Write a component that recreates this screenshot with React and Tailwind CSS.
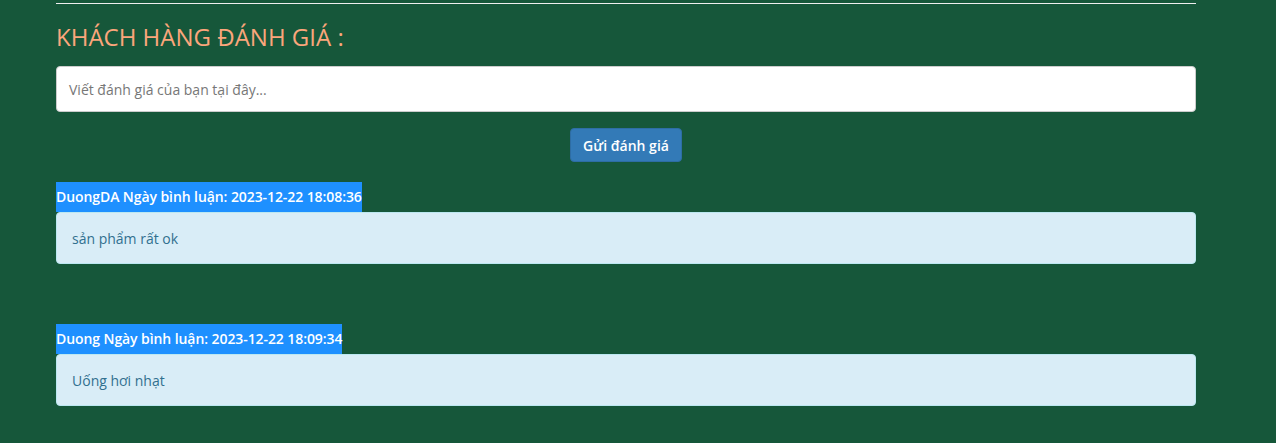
export default function App() {
  const comments = [
    { user: "DuongDA", date: "2023-12-22 18:08:36", text: "sản phẩm rất ok" },
    { user: "Duong", date: "2023-12-22 18:09:34", text: "Uống hơi nhạt" },
  ];
  return (
    <div className="min-h-[443px] w-full bg-[#16573a]" style={{ fontFamily: '"Open Sans", "Noto Sans", sans-serif' }}>
      <div className="ml-[56px] w-[1140px] pt-[3px]">
        <div className="h-px w-full bg-[#eeeeee]" />
        <h2 className="mt-[18px] text-[24px] font-medium leading-[30px] text-[#fba67c]">KHÁCH HÀNG ĐÁNH GIÁ :</h2>
        <div className="mt-[14px] flex h-[46px] w-full items-center rounded-[4px] border border-[#cccccc] bg-white px-[12px]">
          <span className="text-[14px] text-[#777777]">Viết đánh giá của bạn tại đây...</span>
        </div>
        <div className="mt-[16px] flex justify-center">
          <button className="h-[34px] rounded-[4px] border border-[#2e6da4] bg-[#337ab7] px-[12px] text-[14px] font-semibold text-white">
            Gửi đánh giá
          </button>
        </div>
        <div className="mt-[20px] flex flex-col gap-[60px]">
          {comments.map((c, i) => (
            <div key={i}>
              <div className="inline-flex h-[30px] items-center bg-[#1e90ff] pb-px text-[14px] font-semibold tracking-[-0.08px] text-white">
                {c.user} Ngày bình luận: {c.date}
              </div>
              <div className="flex h-[52px] items-center rounded-[4px] border border-[#bce8f1] bg-[#d9edf7] px-[15px] text-[14px] text-[#31708f]">
                {c.text}
              </div>
            </div>
          ))}
        </div>
      </div>
    </div>
  );
}
